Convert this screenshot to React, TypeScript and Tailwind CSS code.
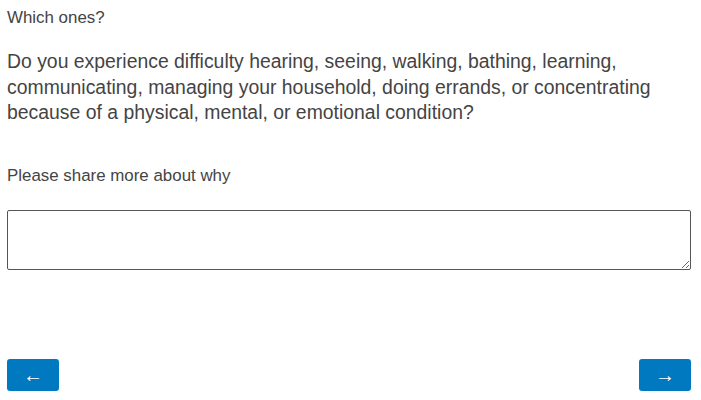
import React from "react";

const App = () => {
  return (
    <div
      className="w-[701px] h-[400px] bg-white text-[#444] pl-[7px] pr-[10px] flex flex-col"
      style={{ fontFamily: '"Liberation Sans", Arial, sans-serif' }}
    >
      <p className="text-[16.9px] leading-[18px] mt-[9px]">Which ones?</p>

      <h2 className="text-[19.4px] leading-[25.5px] mt-[22px]">
        Do you experience difficulty hearing, seeing, walking, bathing, learning,
        communicating, managing your household, doing errands, or concentrating
        because of a physical, mental, or emotional condition?
      </h2>

      <label className="text-[16.9px] leading-[18px] mt-[41px]">Please share more about why</label>

      <textarea className="mt-[25px] w-full h-[60px] border border-[#555] rounded-[2px] bg-white resize-y block" />

      <div className="mt-auto mb-[9px] flex justify-between">
        <button className="w-[52px] h-[32px] rounded-[3px] bg-[#0079c1] text-white text-[20px] leading-none flex items-center justify-center">
          ←
        </button>
        <button className="w-[52px] h-[32px] rounded-[3px] bg-[#0079c1] text-white text-[20px] leading-none flex items-center justify-center">
          →
        </button>
      </div>
    </div>
  );
};

export default App;
